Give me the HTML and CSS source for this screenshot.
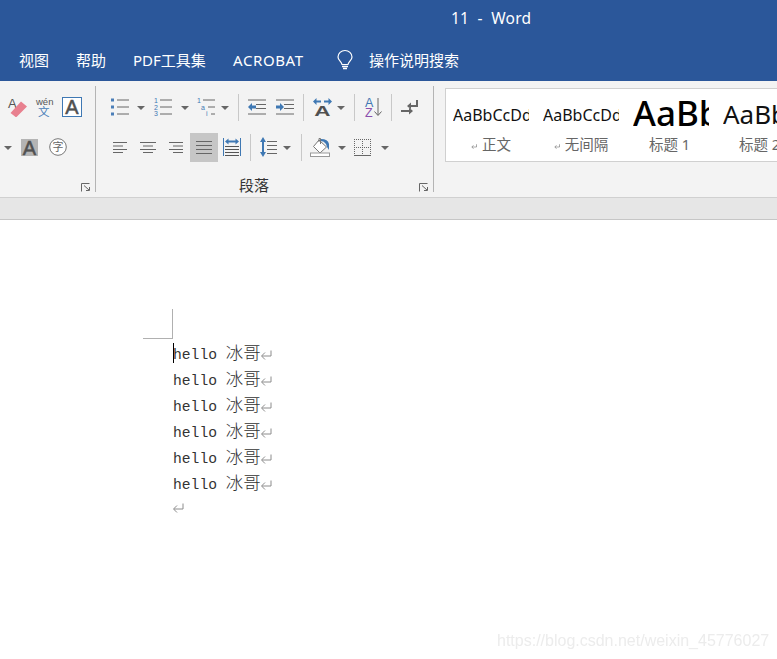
FILE: index.html
```html
<!DOCTYPE html>
<html lang="en">
<head>
    <meta charset="UTF-8">
    <title>11 - Word</title>
    <link rel="stylesheet" href="styles.css">
</head>
<body>
    <svg class="sprite">
        <symbol id="para" viewBox="0 0 12 10">
            <path d="M11 .5v5.5H2M5 2.5L1.5 6 5 9.5" fill="none" stroke="currentColor"/>
        </symbol>
    </svg>

    <header class="titlebar">
        <div class="title">11 &nbsp;-&nbsp; Word</div>
        <nav class="tabs">
            <span class="tab tab-view">视图</span>
            <span class="tab tab-help">帮助</span>
            <span class="tab tab-pdf">PDF工具集</span>
            <span class="tab tab-acrobat">ACROBAT</span>
            <svg class="bulb" width="16" height="20" viewBox="0 0 16 20">
                <path d="M5 14.5C4.6 11.5 1 10.500 1 7a7 6.500 0 0 1 14 0c0 3.500-3.600 4.500-4 7.500z" fill="none" stroke="#fff" stroke-width="1.200"/>
                <path d="M5 16.500h6M6 18.500h4" stroke="#fff" stroke-width="1.300"/>
            </svg>
            <span class="tab">操作说明搜索</span>
        </nav>
    </header>

    <section class="ribbon">
        <div class="group group-font">
            <div class="row row-font-a">
                <svg width="20" height="21" viewBox="0 0 20 21">
                    <text x="0" y="10.500" class="ico-text" font-size="13" fill="#555">A</text>
                    <path d="M2.500 16L13 4.500l6 5L9 19.500q-1 1-2 0z" fill="#e8808f"/>
                </svg>
                <svg width="18" height="20" viewBox="0 0 18 20">
                    <text x="0" y="8" class="ico-text" font-size="9.500" fill="#555">wén</text>
                    <text x="2" y="19" class="ico-cjk" font-size="11.500" fill="#4a7eb8">文</text>
                </svg>
                <svg width="20" height="20" viewBox="0 0 20 20">
                    <rect x=".5" y=".5" width="19" height="19" fill="#fff" stroke="#3f78b3"/>
                    <text x="10" y="17" text-anchor="middle" class="ico-text" stroke="#505050" stroke-width=".5" font-size="20" fill="#505050">A</text>
                </svg>
            </div>
            <div class="row row-font-b">
                <i class="caret"></i>
                <svg width="17" height="17" viewBox="0 0 17 17">
                    <rect width="17" height="17" fill="#b4b4b4"/>
                    <text x="8.500" y="16" text-anchor="middle" class="ico-text" stroke="#505050" stroke-width=".5" font-size="20" fill="#505050">A</text>
                </svg>
                <svg width="18" height="18" viewBox="0 0 18 18">
                    <circle cx="9" cy="9" r="8.300" fill="#fff" stroke="#777"/>
                    <text x="9" y="13" text-anchor="middle" class="ico-cjk" font-size="11" fill="#666">字</text>
                </svg>
            </div>
            <div class="group-foot">
                <svg class="launcher" width="10" height="9" viewBox="0 0 10 9">
                    <path d="M.5 8.500v-8h8M3 2.500L8 7M8.500 4v3.500H5" fill="none" stroke="#666"/>
                </svg>
            </div>
        </div>

        <div class="group group-para">
            <div class="row row-para-a">
                <svg width="18" height="18" viewBox="0 0 18 18">
                    <path d="M6 2h12M6 9h12M6 16h12" stroke="#666"/>
                    <path d="M0 2h3M0 9h3M0 16h3" stroke="#4a7eb8" stroke-width="3"/>
                </svg>
                <i class="caret"></i>
                <svg width="19" height="18" viewBox="0 0 19 18">
                    <path d="M7 2h12M7 9h12M7 16h12" stroke="#666"/>
                    <text x="1" y="5" class="ico-text" font-size="7" fill="#3f78b3">1</text>
                    <text x="1" y="12" class="ico-text" font-size="7" fill="#3f78b3">2</text>
                    <text x="1" y="18" class="ico-text" font-size="7" fill="#3f78b3">3</text>
                </svg>
                <i class="caret"></i>
                <svg width="18" height="18" viewBox="0 0 18 18">
                    <path d="M6 2h12M11 9h7M14 16h4" stroke="#666"/>
                    <text x="0" y="5" class="ico-text" font-size="7" fill="#3f78b3">1</text>
                    <text x="4" y="12" class="ico-text" font-size="7" fill="#3f78b3">a</text>
                    <text x="9" y="18" class="ico-text" font-size="7" fill="#3f78b3">i</text>
                </svg>
                <i class="caret"></i>
                <i class="sep"></i>
                <svg width="18" height="16" viewBox="0 0 18 16">
                    <path d="M0 1h18M8 5.500h10M8 9.500h10M0 15h18" stroke="#666"/>
                    <path d="M0 8l4-4v2.500h4v3H4V12z" fill="#3f78b3"/>
                </svg>
                <svg width="18" height="16" viewBox="0 0 18 16">
                    <path d="M0 1h18M8 5.500h10M8 9.500h10M0 15h18" stroke="#666"/>
                    <path d="M8 8L4 4v2.500H0v3h4V12z" fill="#3f78b3"/>
                </svg>
                <i class="sep"></i>
                <svg width="19" height="18" viewBox="0 0 19 18">
                    <path d="M0 3.500L3.500 0v2.500H8v2H3.500V7zM19 3.500L15.500 0v2.500H11v2h4.500V7z" fill="#3f78b3"/>
                    <text transform="translate(9.500 18) scale(1.500 1)" text-anchor="middle" class="ico-text ico-bold" font-size="15" fill="#505050">A</text>
                </svg>
                <i class="caret"></i>
                <i class="sep"></i>
                <svg width="18" height="19" viewBox="0 0 18 19">
                    <text x="0" y="9" class="ico-text" font-size="12.500" fill="#3f78b3">A</text>
                    <text x="0" y="18.500" class="ico-text" font-size="12.500" fill="#8a4fae">Z</text>
                    <path d="M13 0v17M9.500 13.500L13 17.500l3.500-4" fill="none" stroke="#666"/>
                </svg>
                <i class="sep"></i>
                <svg width="17" height="15" viewBox="0 0 17 15">
                    <path d="M16 0v6H9" fill="none" stroke="#666" stroke-width="2"/>
                    <path d="M6 6l4-3.500v7zM12 11L8 7.500v7z" fill="#666"/>
                    <path d="M0 11h8" stroke="#666" stroke-width="2"/>
                </svg>
            </div>
            <div class="row row-para-b">
                <svg width="14" height="11" viewBox="0 0 14 11">
                    <path d="M0 .5h14M0 4h10M0 7.500h14M0 10.500h10" stroke="#666"/>
                </svg>
                <svg width="16" height="11" viewBox="0 0 16 11">
                    <path d="M0 .5h16M3 4h10M0 7.500h16M3 10.500h10" stroke="#666"/>
                </svg>
                <svg width="14" height="11" viewBox="0 0 14 11">
                    <path d="M0 .5h14M4 4h10M0 7.500h14M4 10.500h10" stroke="#666"/>
                </svg>
                <div class="tool-on">
                    <svg width="16" height="13" viewBox="0 0 16 13">
                        <path d="M0 .5h16M0 4.500h16M0 8.500h16M0 12.500h16" stroke="#666"/>
                    </svg>
                </div>
                <svg width="18" height="18" viewBox="0 0 18 18">
                    <path d="M.500 0v18M17.500 0v18" stroke="#3f78b3"/>
                    <path d="M2 3.500l3.500-3v2h7v-2l3.500 3-3.500 3v-2h-7v2z" fill="#3f78b3"/>
                    <path d="M2 8.500h14M2 11.500h14M2 14.500h14M2 17.500h14" stroke="#555"/>
                </svg>
                <i class="sep"></i>
                <svg width="17" height="20" viewBox="0 0 17 20">
                    <path d="M3 0l3 5H4v10h2l-3 5-3-5h2V5H0z" fill="#3f78b3"/>
                    <path d="M7 4.500h10M7 8.500h10M7 12.500h10M7 16.500h10" stroke="#666"/>
                </svg>
                <i class="caret"></i>
                <i class="sep"></i>
                <svg width="20" height="20" viewBox="0 0 20 20">
                    <path d="M3.500 9.500L9 3l7.500 7L10 16z" fill="#fff" stroke="#777"/>
                    <path d="M9 5V1.500h1.500V7" fill="none" stroke="#777"/>
                    <path d="M11 2q7 0 8 5v6l-2-3-1-3q-2-3-5-3z" fill="#3f78b3"/>
                    <rect x=".5" y="16" width="19" height="3.500" fill="#fff" stroke="#999"/>
                </svg>
                <i class="caret"></i>
                <svg width="17" height="17" viewBox="0 0 17 17">
                    <path d="M.500 0v16M8.500 0v16M16.500 0v16M0 .5h17M0 8.500h17" stroke="#666" stroke-dasharray="1 1"/>
                    <path d="M0 16.500h17" stroke="#666"/>
                </svg>
                <i class="caret"></i>
            </div>
            <div class="group-foot foot-para">
                <span class="group-label">段落</span>
                <svg class="launcher" width="10" height="9" viewBox="0 0 10 9">
                    <path d="M.5 8.500v-8h8M3 2.500L8 7M8.500 4v3.500H5" fill="none" stroke="#666"/>
                </svg>
            </div>
        </div>

        <div class="gallery">
            <div class="style-item">
                <div class="sample">AaBbCcDd</div>
                <div class="style-name"><svg class="mark-small"><use href="#para"/></svg>正文</div>
            </div>
            <div class="style-item">
                <div class="sample">AaBbCcDd</div>
                <div class="style-name"><svg class="mark-small"><use href="#para"/></svg>无间隔</div>
            </div>
            <div class="style-item">
                <div class="sample sample-h1">AaBb</div>
                <div class="style-name name-plain">标题 1</div>
            </div>
            <div class="style-item">
                <div class="sample sample-h2">AaBb</div>
                <div class="style-name name-plain">标题 2</div>
            </div>
        </div>
    </section>

    <div class="ribbon-band"></div>

    <main class="page">
        <div class="crop-mark"></div>
        <div class="text-body">
            <i class="cursor"></i>
            <p>hello <span class="cjk">冰哥</span><svg class="mark"><use href="#para"/></svg></p>
            <p>hello <span class="cjk">冰哥</span><svg class="mark"><use href="#para"/></svg></p>
            <p>hello <span class="cjk">冰哥</span><svg class="mark"><use href="#para"/></svg></p>
            <p>hello <span class="cjk">冰哥</span><svg class="mark"><use href="#para"/></svg></p>
            <p>hello <span class="cjk">冰哥</span><svg class="mark"><use href="#para"/></svg></p>
            <p>hello <span class="cjk">冰哥</span><svg class="mark"><use href="#para"/></svg></p>
            <p><svg class="mark"><use href="#para"/></svg></p>
        </div>
    </main>

    <div class="watermark">https://blog.csdn.net/weixin_45776027</div>
</body>
</html>
```

FILE: styles.css
```css
:root {
    --word-blue: #2b579a;
    --ribbon-bg: #f3f3f3;
    --band-bg: #e6e6e6;
    --line: #d0d0d0;
    --text-gray: #666;
}

* {
    margin: 0;
    padding: 0;
    box-sizing: border-box;
}

body {
    position: relative;
    width: 777px;
    height: 659px;
    overflow: hidden;
    background: #fff;
    font-family: "Noto Sans", "Noto Sans CJK SC", sans-serif;
}

svg {
    overflow: visible;
}

.sprite {
    display: none;
}

.titlebar {
    height: 81px;
    background: var(--word-blue);
    color: #fff;
}

.title {
    height: 37px;
    padding: 7px 0 0 451px;
    font-size: 15.5px;
    line-height: 22px;
    letter-spacing: 0.2px;
    white-space: nowrap;
}

.tabs {
    display: flex;
    align-items: center;
    height: 44px;
    padding: 2px 0 0 19px;
}

.tab {
    font-family: "Noto Sans CJK SC", sans-serif;
    font-size: 15px;
    line-height: 20px;
    white-space: nowrap;
}

.tab-view {
    width: 57px;
}

.tab-help {
    width: 57px;
}

.tab-pdf {
    width: 100px;
    font-family: "Noto Sans", "Noto Sans CJK SC", sans-serif;
}

.tab-acrobat {
    width: 104px;
    font-family: "Noto Sans", sans-serif;
    font-size: 15px;
    letter-spacing: 0.6px;
}

.bulb {
    margin-right: 16px;
}

.ribbon {
    display: flex;
    height: 116px;
    padding-top: 5px;
    background: var(--ribbon-bg);
    overflow: hidden;
}

.group {
    flex: none;
    height: 106px;
    padding-top: 1px;
    border-right: 1px solid #b4b4b4;
}

.group-font {
    width: 96px;
}

.group-para {
    width: 338px;
}

.row {
    display: grid;
    align-items: center;
    justify-items: start;
    height: 40px;
}

.row-font-a {
    grid-template-columns: 28px 26px 20px;
    padding-left: 8px;
}

.row-font-b {
    grid-template-columns: 17px 28px 18px;
    padding-left: 4px;
}

.row-para-a {
    grid-template-columns: 26px 16px 28px 16px 24px 17px 10px 28px 27px 10px 24px 17px 11px 26px 10px 17px;
    padding-left: 15px;
}

.row-para-b {
    grid-template-columns: 27px 29px 21px 33px 27px 10px 23px 18px 9px 28px 16px 27px 8px;
    padding-left: 17px;
}

.caret {
    display: block;
    width: 0;
    height: 0;
    margin-top: 2px;
    border-left: 4px solid transparent;
    border-right: 4px solid transparent;
    border-top: 4px solid var(--text-gray);
}

.sep {
    display: block;
    width: 1px;
    height: 27px;
    background: #c8c8c8;
}

.tool-on {
    display: flex;
    align-items: center;
    justify-content: center;
    width: 28px;
    height: 29px;
    background: #c6c6c6;
}

.ico-text {
    font-family: "Liberation Sans", sans-serif;
}

.ico-bold {
    font-weight: 700;
}

.ico-cjk {
    font-family: "Noto Sans CJK SC", sans-serif;
}

.group-foot {
    display: flex;
    align-items: center;
    height: 25px;
    padding: 11px 4px 0 0;
    justify-content: flex-end;
}

.foot-para {
    justify-content: flex-start;
    padding-left: 143px;
}

.foot-para .launcher {
    margin-left: auto;
}

.group-label {
    font-family: "Noto Sans CJK SC", sans-serif;
    font-size: 15px;
    line-height: 14px;
    color: #333;
}

.launcher {
    align-self: flex-end;
    flex: none;
}

.gallery {
    display: flex;
    flex: none;
    width: 345px;
    height: 74px;
    margin: 2px 0 0 11px;
    padding-left: 7px;
    background: #fff;
    border: 1px solid var(--line);
}

.style-item {
    flex: none;
    width: 90px;
}

.sample {
    width: 76px;
    height: 45px;
    padding-top: 14px;
    overflow: hidden;
    font-size: 16px;
    line-height: 24px;
    color: #111;
    white-space: nowrap;
}

.sample-h1 {
    padding-top: 4px;
    font-size: 35px;
    line-height: 40px;
    font-weight: 500;
    color: #000;
}

.sample-h2 {
    padding-top: 9px;
    font-size: 26px;
    line-height: 32px;
}

.style-name {
    width: 76px;
    font-family: "Noto Sans", "Noto Sans CJK SC", sans-serif;
    font-size: 14.5px;
    line-height: 20px;
    color: var(--text-gray);
    text-align: center;
    white-space: nowrap;
}

.name-plain {
    padding-right: 3px;
}

.mark-small {
    width: 6px;
    height: 7px;
    margin-right: 5px;
    color: #555;
}

.ribbon-band {
    height: 23px;
    background: var(--band-bg);
    border-top: 1px solid var(--line);
    border-bottom: 1px solid #c6c6c6;
}

.page {
    padding: 89px 0 0 143px;
}

.crop-mark {
    width: 30px;
    height: 30px;
    border-right: 1px solid #b0b0b0;
    border-bottom: 1px solid #b0b0b0;
}

.text-body {
    position: relative;
    margin: 0 0 0 30px;
    font-family: "Liberation Mono", monospace;
    font-size: 14.67px;
    color: #333;
}

.text-body p {
    height: 26px;
    line-height: 26px;
    white-space: pre;
}

.cjk {
    font-family: "Noto Sans CJK SC", sans-serif;
    font-size: 17.5px;
    font-weight: 300;
    color: #333;
}

.mark {
    width: 12px;
    height: 10px;
    margin-left: -1px;
    vertical-align: -1px;
    color: #8c8c8c;
}

/* text cursor on the first line */
.cursor {
    position: absolute;
    left: 0;
    top: 4px;
    width: 1px;
    height: 20px;
    background: #000;
}

.watermark {
    position: absolute;
    left: 497px;
    top: 630px;
    font-family: "Liberation Sans", sans-serif;
    font-size: 16px;
    line-height: 22px;
    color: #ececec;
    white-space: nowrap;
    filter: blur(0.4px);
}
```
